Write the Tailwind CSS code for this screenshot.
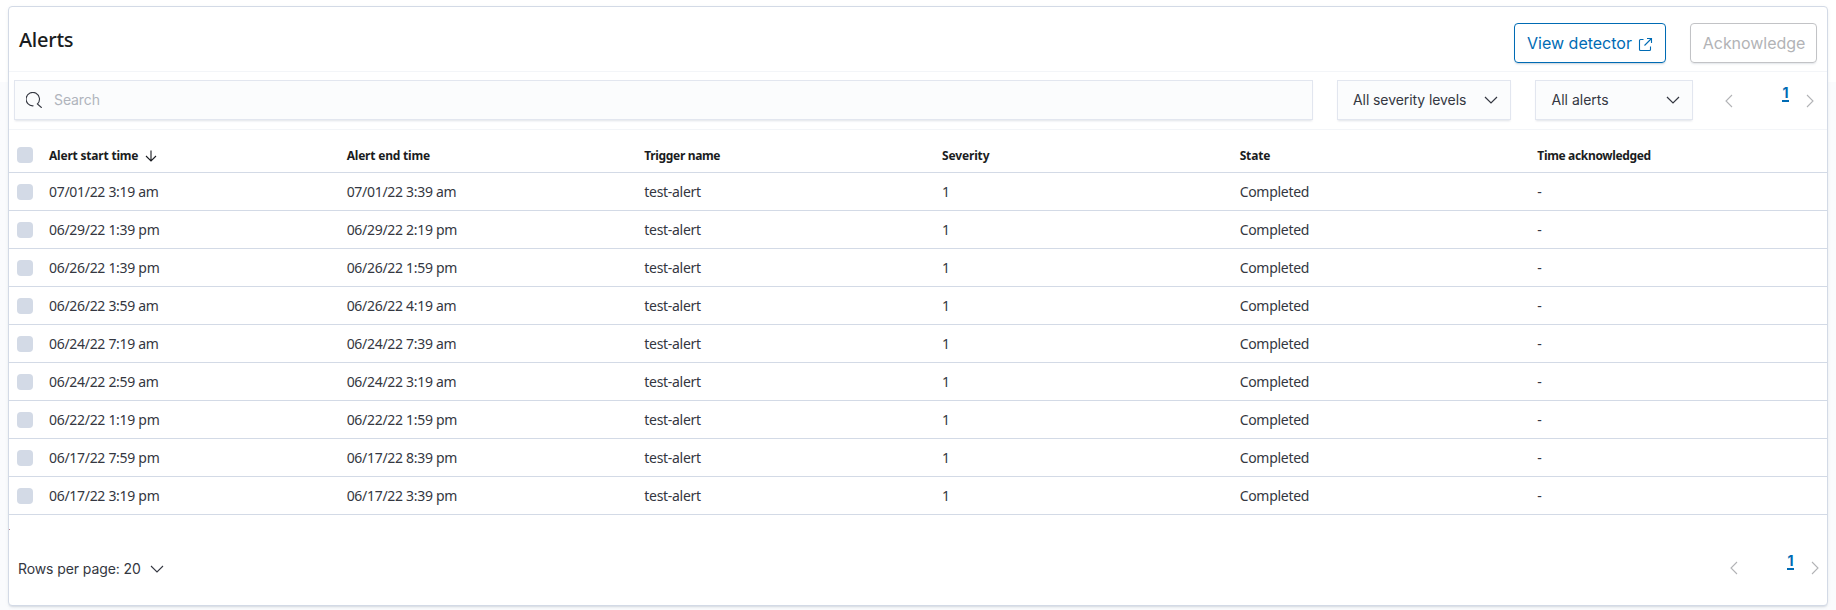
<!DOCTYPE html>
<html lang="en">
<head>
<meta charset="utf-8">
<title>Alerts</title>
<script src="https://cdn.jsdelivr.net/npm/@tailwindcss/browser@4"></script>
</head>
<body class="h-[610px] overflow-hidden bg-linear-to-b from-white from-[82px] to-[#fafbfd] to-[82px] pt-1.5 pl-2 font-['Inter',sans-serif] text-[#343741]">
<main class="flex h-[600px] w-[1820px] flex-col rounded border border-[#d3dae6] bg-white shadow-[0_2px_2px_-1px_rgba(152,162,179,0.3),0_1px_5px_-2px_rgba(152,162,179,0.3)]">
  <header class="flex h-[65px] shrink-0 items-start justify-between border-b border-[#f3f5f8] pt-4 pr-2.5 pl-2.5">
    <h1 class="pt-px font-['Noto_Sans',sans-serif] text-xl leading-8 font-medium tracking-[-0.25px] text-[#1a1c21]">Alerts</h1>
    <div class="flex gap-6">
      <button class="flex h-10 w-[152px] items-center justify-center gap-1.5 rounded border border-[#006bb4] pl-px text-base text-[#006bb4] shadow-[0_2px_2px_-1px_rgba(54,97,126,0.3)]"><span>View detector</span>
        <svg class="mt-0.5 size-4 shrink-0" viewBox="0 0 16 16" fill="none" stroke="currentColor" stroke-width="1.1"><path d="M5.500 3.500h-3a1 1 0 0 0-1 1v9a1 1 0 0 0 1 1h9a1 1 0 0 0 1-1V10.500M9 2.500h4.500V7M6.500 9.500l7-7"/></svg>
      </button>
      <button class="flex h-10 w-[127px] items-center justify-center rounded border border-[#c2c3c6] pl-px text-base tracking-[-0.05px] text-[#b2b3b6] shadow-[0_2px_2px_-1px_rgba(152,162,179,0.3)]"><span>Acknowledge</span></button>
    </div>
  </header>
  <section class="flex h-[58px] shrink-0 items-start border-b border-[#f3f5f8] pt-2 pl-[5px]">
    <label class="flex h-10 w-[1299px] items-center gap-3 border border-[#e2e6ef] bg-[#fbfcfd] pl-[11px] shadow-[0_2px_2px_-1px_rgba(152,162,179,0.3)]">
      <svg class="size-4 shrink-0" viewBox="0 0 16 16" fill="none" stroke="#343741" stroke-width="1.1"><path d="M7.500 13.800A6.700 6.700 0 1 1 11.400 12L15.700 15.800"/></svg>
      <span class="text-sm tracking-[-0.1px] text-[#b0b4bc]">Search</span>
    </label>
    <button class="ml-6 flex h-10 w-[174px] items-center justify-between border border-[#e2e6ef] bg-[#fbfcfd] pr-[11px] pl-[15px] text-sm tracking-[-0.08px] shadow-[0_2px_2px_-1px_rgba(152,162,179,0.3)]"><span>All severity levels</span>
      <svg class="size-4" viewBox="0 0 16 16" fill="none" stroke="currentColor" stroke-width="1.2"><path d="m2 5 6 6 6-6"/></svg>
    </button>
    <button class="ml-6 flex h-10 w-[158px] items-center justify-between border border-[#e2e6ef] bg-[#fbfcfd] pr-[11px] pl-[15.5px] text-sm shadow-[0_2px_2px_-1px_rgba(152,162,179,0.3)]"><span>All alerts</span>
      <svg class="size-4" viewBox="0 0 16 16" fill="none" stroke="currentColor" stroke-width="1.2"><path d="m2 5 6 6 6-6"/></svg>
    </button>
    <nav class="ml-7 flex h-10 items-start text-[#b2b3b6]">
      <svg class="mt-[13px] size-4" viewBox="0 0 16 16" fill="none" stroke="currentColor" stroke-width="1.1"><path d="m11 2-6 6 6 6"/></svg>
      <span class="mt-[5px] ml-[45px] flex h-[17px] w-[7px] justify-center border-b-2 border-[#006bb4] text-sm leading-4 font-bold text-[#006bb4]">1</span>
      <svg class="mt-[13px] ml-[13px] size-4" viewBox="0 0 16 16" fill="none" stroke="currentColor" stroke-width="1.1"><path d="m5 2 6 6-6 6"/></svg>
    </nav>
  </section>
  <div id="table" class="shrink-0 font-['Noto_Sans',sans-serif]">
    <div class="grid h-[43px] grid-cols-[32px_repeat(6,1fr)] items-end border-b border-[#d3dae6] pb-[7px] text-xs leading-[18px] font-bold tracking-[-0.34px] text-[#1a1c21]">
      <i class="mb-0.5 ml-2 size-4 rounded bg-[#d3dae6]"></i>
      <div class="flex items-center gap-[5px] pl-2"><span class="tracking-[-0.2px]">Alert start time</span>
        <svg class="-mt-px size-4" viewBox="0 0 16 16" fill="none" stroke="currentColor" stroke-width="1.1"><path d="M8 2.500v10.500M3 8l5 5 5-5"/></svg></div>
      <div class="pl-2"><span class="tracking-[-0.2px]">Alert end time</span></div>
      <div class="pl-2"><span>Trigger name</span></div>
      <div class="pl-2"><span class="tracking-[-0.15px]">Severity</span></div>
      <div class="pl-2"><span class="tracking-[-0.15px]">State</span></div>
      <div class="pl-2"><span>Time acknowledged</span></div>
    </div>
    <div id="rows"></div>
  </div>
  <i class="mt-3.5 h-px w-px shrink-0 bg-[#b98a95]"></i>
  <footer class="flex justify-between pt-[27px] pr-1 pl-[9px]">
    <button class="flex h-6 items-center gap-2 text-sm tracking-[-0.1px]"><span>Rows per page: 20</span>
      <svg class="size-4" viewBox="0 0 16 16" fill="none" stroke="currentColor" stroke-width="1.1"><path d="m2 5 6 6 6-6"/></svg>
    </button>
    <nav class="flex h-10 items-start text-[#b2b3b6]">
      <svg class="mt-[3px] size-4" viewBox="0 0 16 16" fill="none" stroke="currentColor" stroke-width="1.1"><path d="m11 2-6 6 6 6"/></svg>
      <span class="-mt-1 ml-[45px] flex h-[17px] w-[7px] justify-center border-b-2 border-[#006bb4] text-sm leading-4 font-bold text-[#006bb4]">1</span>
      <svg class="mt-[3px] ml-[13px] size-4" viewBox="0 0 16 16" fill="none" stroke="currentColor" stroke-width="1.1"><path d="m5 2 6 6-6 6"/></svg>
    </nav>
  </footer>
</main>
<script>
const alerts = [
  ["07/01/22 3:19 am", "07/01/22 3:39 am"],
  ["06/29/22 1:39 pm", "06/29/22 2:19 pm"],
  ["06/26/22 1:39 pm", "06/26/22 1:59 pm"],
  ["06/26/22 3:59 am", "06/26/22 4:19 am"],
  ["06/24/22 7:19 am", "06/24/22 7:39 am"],
  ["06/24/22 2:59 am", "06/24/22 3:19 am"],
  ["06/22/22 1:19 pm", "06/22/22 1:59 pm"],
  ["06/17/22 7:59 pm", "06/17/22 8:39 pm"],
  ["06/17/22 3:19 pm", "06/17/22 3:39 pm"]
];
document.getElementById("rows").innerHTML = alerts.map(([start, end]) => `
  <div class="grid h-[38px] grid-cols-[32px_repeat(6,1fr)] items-center border-b border-[#d3dae6] text-sm tracking-[-0.3px]">
    <i class="ml-2 size-4 rounded bg-[#d3dae6]"></i>
    ${[start, end, "test-alert", "1", "Completed", "-"].map(t => `<div class="pl-2"><span>${t}</span></div>`).join("")}
  </div>`).join("");
</script>
</body>
</html>
